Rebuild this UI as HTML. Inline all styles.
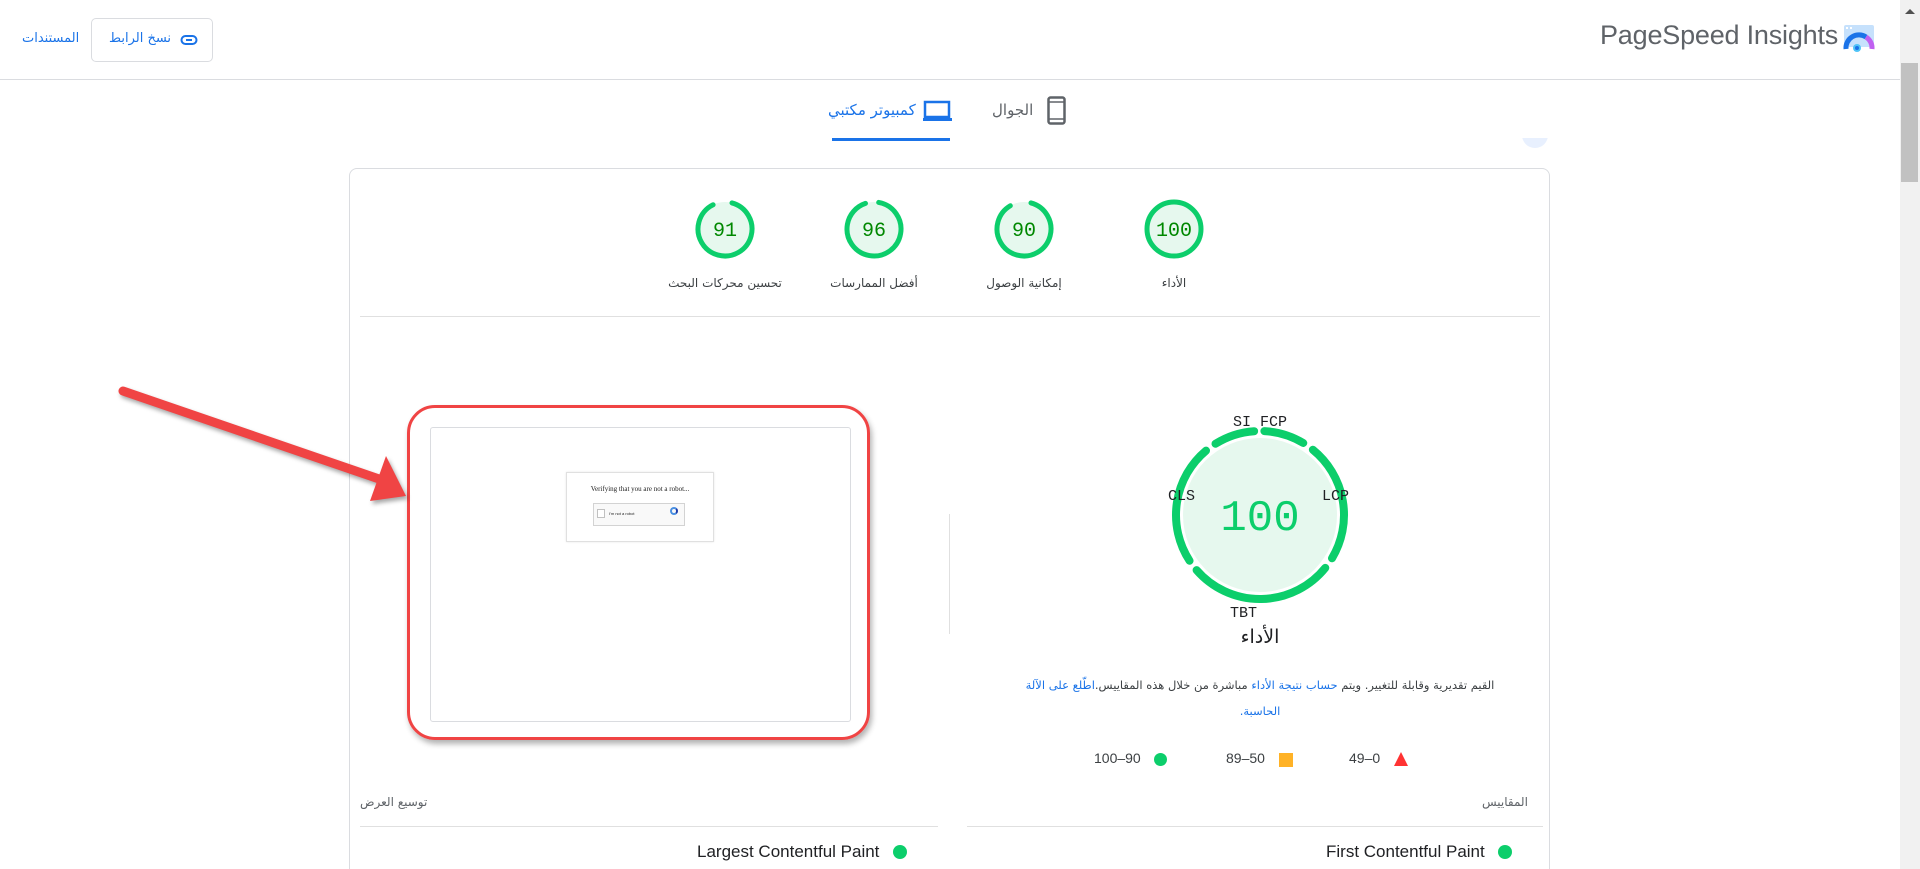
<!DOCTYPE html>
<html style="width:1920px;height:869px;overflow:hidden"><head><meta charset="utf-8">
<style>
*{margin:0;padding:0;box-sizing:border-box}
body{width:1920px;height:869px;overflow:hidden;background:#fff;font-family:"Liberation Sans","DejaVu Sans",sans-serif;position:relative;color:#202124}
.a{position:absolute}
.ar{font-family:"DejaVu Sans","Liberation Sans",sans-serif}
.mono{font-family:"Liberation Mono","DejaVu Sans Mono",monospace}
</style></head><body>
<!-- header -->
<div class="a" style="left:0;top:79px;width:1900px;height:1px;background:#dadce0"></div>
<div class="a ar" style="left:22px;top:31px;font-size:13px;color:#1a73e8">المستندات</div>
<div class="a" style="left:91px;top:18px;width:122px;height:44px;border:1px solid #dadce0;border-radius:5px"></div>
<div class="a ar" style="left:109px;top:31px;font-size:13px;color:#1a73e8">نسخ الرابط</div>
<svg class="a" style="left:180px;top:34px" width="18" height="12" viewBox="0 0 18 12"><rect x="1.5" y="2" width="15" height="8" rx="4" fill="none" stroke="#1a73e8" stroke-width="2"/><line x1="6" y1="6" x2="12" y2="6" stroke="#1a73e8" stroke-width="2"/></svg>
<div class="a" style="left:1600px;top:20px;font-size:27px;color:#5f6368;letter-spacing:-0.2px">PageSpeed Insights</div>
<svg class="a" style="left:1843px;top:25px" width="32" height="31" viewBox="0 0 32 31"><rect x="1" y="0" width="30" height="22" rx="2" fill="#c6e1fc"/><rect x="3" y="2" width="2" height="2" fill="#fff"/><rect x="7" y="2" width="2" height="2" fill="#fff"/><path d="M3,24 A13,13 0 0 1 23,12" fill="none" stroke="#1a73e8" stroke-width="5"/><path d="M23,12 A13,13 0 0 1 29,24" fill="none" stroke="#c060f0" stroke-width="5"/><circle cx="14" cy="23" r="4" fill="#4fc3f7"/><circle cx="14" cy="23" r="2" fill="#1a73e8"/></svg>
<!-- scrollbar -->
<div class="a" style="left:1900px;top:0;width:20px;height:869px;background:#f1f1f1"></div>
<div class="a" style="left:1901px;top:63px;width:17px;height:119px;background:#c1c1c1"></div>
<div class="a" style="left:1905px;top:9px;width:0;height:0;border-left:5px solid transparent;border-right:5px solid transparent;border-bottom:5px solid #505050"></div>
<!-- tabs -->
<div class="a ar" style="left:828px;top:101px;font-size:15px;color:#1a73e8">كمبيوتر مكتبي</div>
<svg class="a" style="left:923px;top:100px" width="29" height="22"><rect x="2" y="2" width="24" height="15" fill="none" stroke="#1a73e8" stroke-width="2.5"/><rect x="0" y="18" width="29" height="3" fill="#1a73e8"/></svg>
<div class="a" style="left:832px;top:138px;width:118px;height:3px;background:#1a73e8"></div>
<div class="a ar" style="left:992px;top:101px;font-size:15px;color:#5f6368">الجوال</div>
<svg class="a" style="left:1047px;top:96px" width="19" height="29"><rect x="1.5" y="1.5" width="16" height="26" rx="2" fill="none" stroke="#5f6368" stroke-width="2.5"/><line x1="2" y1="6" x2="17" y2="6" stroke="#5f6368" stroke-width="1.5"/><line x1="2" y1="23" x2="17" y2="23" stroke="#5f6368" stroke-width="1.5"/></svg>
<div class="a" style="left:1522px;top:138px;width:26px;height:10px;overflow:hidden"><div style="width:26px;height:26px;border-radius:50%;background:#e8f0fe;margin-top:-16px"></div></div>
<!-- card -->
<div class="a" style="left:349px;top:168px;width:1201px;height:740px;border:1px solid #dadce0;border-radius:8px"></div>
<!-- small gauges -->
<svg class="a" style="left:695px;top:199px" width="60" height="60"><circle cx="30" cy="30" r="27" fill="#e6f8ee"/><circle cx="30" cy="30" r="27" fill="none" stroke="#0cce6b" stroke-width="5" stroke-dasharray="150 170" transform="rotate(-75 30 30)" stroke-linecap="round"/><text x="30" y="37" text-anchor="middle" font-family="Liberation Mono,monospace" font-size="20" fill="#008800">91</text></svg>
<svg class="a" style="left:844px;top:199px" width="60" height="60"><circle cx="30" cy="30" r="27" fill="#e6f8ee"/><circle cx="30" cy="30" r="27" fill="none" stroke="#0cce6b" stroke-width="5" stroke-dasharray="156 170" transform="rotate(-80 30 30)" stroke-linecap="round"/><text x="30" y="37" text-anchor="middle" font-family="Liberation Mono,monospace" font-size="20" fill="#008800">96</text></svg>
<svg class="a" style="left:994px;top:199px" width="60" height="60"><circle cx="30" cy="30" r="27" fill="#e6f8ee"/><circle cx="30" cy="30" r="27" fill="none" stroke="#0cce6b" stroke-width="5" stroke-dasharray="148 170" transform="rotate(-75 30 30)" stroke-linecap="round"/><text x="30" y="37" text-anchor="middle" font-family="Liberation Mono,monospace" font-size="20" fill="#008800">90</text></svg>
<svg class="a" style="left:1144px;top:199px" width="60" height="60"><circle cx="30" cy="30" r="27" fill="#e6f8ee" stroke="#0cce6b" stroke-width="5"/><text x="30" y="37" text-anchor="middle" font-family="Liberation Mono,monospace" font-size="20" fill="#008800">100</text></svg>
<div class="a ar" style="left:645px;top:276px;width:160px;text-align:center;font-size:12px;color:#3c4043">تحسين محركات البحث</div>
<div class="a ar" style="left:794px;top:276px;width:160px;text-align:center;font-size:12px;color:#3c4043">أفضل الممارسات</div>
<div class="a ar" style="left:944px;top:276px;width:160px;text-align:center;font-size:12px;color:#3c4043">إمكانية الوصول</div>
<div class="a ar" style="left:1094px;top:276px;width:160px;text-align:center;font-size:12px;color:#3c4043">الأداء</div>
<div class="a" style="left:360px;top:316px;width:1180px;height:1px;background:#e0e0e0"></div>
<!-- big gauge -->
<svg class="a" style="left:1170px;top:425px" width="180" height="180"><circle cx="90" cy="90" r="77" fill="#e6f8ee"/>
<g fill="none" stroke="#0cce6b" stroke-width="8" stroke-linecap="round">
<path d="M94.4,6.12 A84,84 0 0 1 133.26,18"/>
<path d="M142.86,24.72 A84,84 0 0 1 162,133.26"/>
<path d="M155.28,142.86 A84,84 0 0 1 26.6,145.11"/>
<path d="M19.55,135.75 A84,84 0 0 1 36.01,25.65"/>
<path d="M45.49,18.76 A84,84 0 0 1 84.14,6.2"/></g>
<text x="90" y="105" text-anchor="middle" font-family="Liberation Mono,monospace" font-size="44" fill="#0cce6b">100</text></svg>
<div class="a mono" style="left:1220px;top:414px;width:80px;text-align:center;font-size:15px;color:#202124">SI FCP</div>
<div class="a mono" style="left:1168px;top:488px;font-size:15px;color:#202124">CLS</div>
<div class="a mono" style="left:1322px;top:488px;font-size:15px;color:#202124">LCP</div>
<div class="a mono" style="left:1230px;top:605px;font-size:15px;color:#202124">TBT</div>
<div class="a ar" style="left:1200px;top:626px;width:120px;text-align:center;font-size:19px;color:#202124">الأداء</div>
<div class="a" style="left:949px;top:514px;width:1px;height:120px;background:#e0e0e0"></div>
<div class="a ar" dir="rtl" style="left:1010px;top:672px;width:500px;text-align:center;font-size:11.5px;line-height:26px;color:#3c4043;white-space:nowrap">القيم تقديرية وقابلة للتغيير. ويتم <span style="color:#1a73e8">حساب نتيجة الأداء</span> مباشرة من خلال هذه المقاييس.<span style="color:#1a73e8">اطّلع على الآلة<br>الحاسبة.</span></div>
<div class="a" style="left:1094px;top:750px;font-size:14px;color:#3c4043">100–90</div>
<div class="a" style="left:1154px;top:753px;width:13px;height:13px;border-radius:50%;background:#0cce6b"></div>
<div class="a" style="left:1226px;top:750px;font-size:14px;color:#3c4043">89–50</div>
<div class="a" style="left:1279px;top:753px;width:14px;height:14px;background:#ffa400;opacity:.85"></div>
<div class="a" style="left:1349px;top:750px;font-size:14px;color:#3c4043">49–0</div>
<div class="a" style="left:1394px;top:752px;width:0;height:0;border-left:7px solid transparent;border-right:7px solid transparent;border-bottom:14px solid #ff3333"></div>
<!-- screenshot -->
<div class="a" style="left:407px;top:405px;width:463px;height:335px;border:3px solid #f04444;border-radius:28px;box-shadow:2px 4px 6px rgba(0,0,0,.3)"></div>
<div class="a" style="left:430px;top:427px;width:421px;height:295px;border:1px solid #dadce0;border-radius:3px"></div>
<div class="a" style="left:566px;top:472px;width:148px;height:70px;border:1px solid #e0e0e0;box-shadow:0 0 2px rgba(0,0,0,.1)"></div>
<div class="a" style="left:566px;top:485px;width:148px;text-align:center;font-family:'Liberation Serif',serif;font-size:7px;color:#222">Verifying that you are not a robot...</div>
<div class="a" style="left:593px;top:503px;width:92px;height:23px;border:1px solid #d3d3d3;background:#f9f9f9"></div>
<div class="a" style="left:597px;top:509px;width:8px;height:9px;border:1px solid #c1c1c1;background:#fff"></div>
<div class="a" style="left:609px;top:511px;font-size:4px;color:#222">I'm not a robot</div>
<div class="a" style="left:670px;top:507px;width:8px;height:8px;border:2px solid #4a90e2;border-radius:50%;border-right-color:#1c3aa9"></div>
<!-- arrow -->
<svg class="a" style="left:110px;top:380px" width="310" height="130"><g style="filter:drop-shadow(2px 3px 2px rgba(0,0,0,.35))"><line x1="13" y1="11" x2="272" y2="100" stroke="#f04444" stroke-width="9" stroke-linecap="round"/><polygon points="296,116 260,121 276,76" fill="#f04444"/></g></svg>
<!-- bottom -->
<div class="a ar" style="left:360px;top:795px;font-size:12px;color:#5f6368">توسيع العرض</div>
<div class="a ar" style="left:1482px;top:795px;font-size:12px;color:#5f6368">المقاييس</div>
<div class="a" style="left:360px;top:826px;width:578px;height:1px;background:#e0e0e0"></div>
<div class="a" style="left:967px;top:826px;width:576px;height:1px;background:#e0e0e0"></div>
<div class="a" style="left:697px;top:842px;font-size:17px;color:#202124">Largest Contentful Paint</div>
<div class="a" style="left:893px;top:845px;width:14px;height:14px;border-radius:50%;background:#0cce6b"></div>
<div class="a" style="left:1326px;top:842px;font-size:17px;color:#202124">First Contentful Paint</div>
<div class="a" style="left:1498px;top:845px;width:14px;height:14px;border-radius:50%;background:#0cce6b"></div>
</body></html>
